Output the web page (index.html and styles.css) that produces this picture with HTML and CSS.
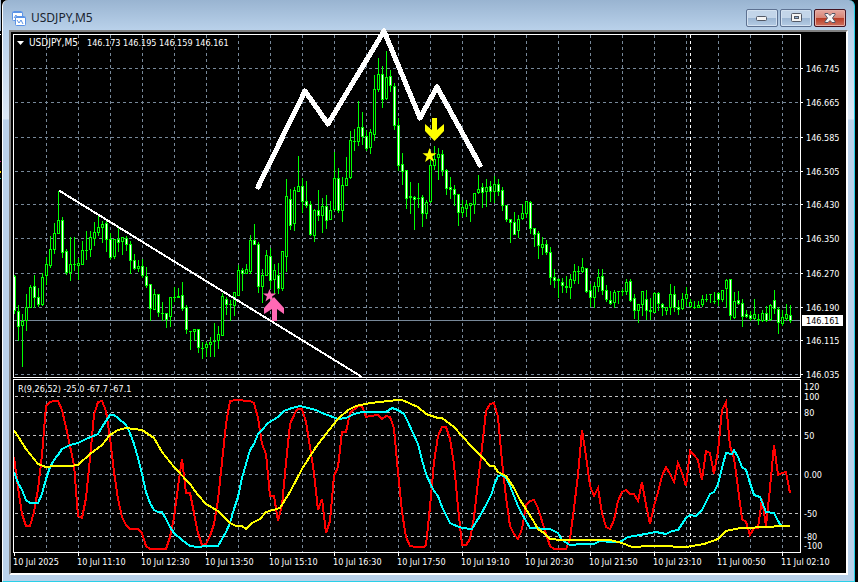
FILE: index.html
```html
<!DOCTYPE html>
<html lang="en">
<head>
    <meta charset="UTF-8">
    <meta name="viewport" content="width=device-width, initial-scale=1.0">
    <title>USDJPY,M5</title>
    <link rel="stylesheet" href="styles.css">
</head>
<body>
    <main class="window">
        <header class="titlebar">
            <svg class="app-icon" width="14" height="15" viewBox="0 0 14 15" aria-hidden="true">
                <rect x="0.5" y="0.5" width="10" height="9" rx="1" fill="#fff" stroke="#5b93e6"/>
                <path d="M1 1.500h9" stroke="#5b93e6"/>
                <path d="M2 7l2-3 1 3" fill="none" stroke="#5b93e6"/>
                <rect x="3.5" y="5.5" width="10" height="9" rx="1" fill="#fff" stroke="#5b93e6"/>
                <path d="M4 6.500h9" stroke="#5b93e6"/>
                <path d="M5 9l2 3 2-3 2 4" fill="none" stroke="#5b93e6"/>
            </svg>
            <h1>USDJPY,M5</h1>
            <div class="controls">
                <button type="button" aria-label="Minimize">
                    <svg width="12" height="6" viewBox="0 0 12 6"><rect x="0.5" y="1.5" width="10" height="4" rx="1" fill="#f4f4f4" stroke="#535966"/></svg>
                </button>
                <button type="button" aria-label="Maximize">
                    <svg width="12" height="10" viewBox="0 0 12 10"><rect x="1.5" y="0.5" width="10" height="8" rx="1" fill="#f4f4f4" stroke="#535966"/><rect x="4.5" y="3.5" width="4" height="2" fill="#8fb0d2" stroke="#535966"/></svg>
                </button>
                <button type="button" class="close" aria-label="Close">
                    <svg width="12" height="10" viewBox="0 0 12 10"><path d="M1 .5h3l2 2 2-2h3v1L8.500 5 11 8.500v1H8l-2-2-2 2H1v-1L3.500 5 1 1.500z" fill="#f6f6f6" stroke="#535666"/></svg>
                </button>
            </div>
        </header>
        <div class="chart">
            <svg id="chart" viewBox="11 32 835 541" role="img" aria-label="USDJPY,M5 chart">
                <g id="grid"></g>
                <g id="candles"></g>
                <g id="indicator"></g>
                <g id="frame"></g>
                <g id="drawings">
                    <path class="trend" d="M59 190.500L362 377"/>
                    <path class="zigzag" d="M258 187L305 91L328 124L384 31L420 118L437 87L480 165"/>
                    <path class="sell" d="M432 118h5v12l7-6v7l-9.500 10L425 131v-7l7 6z"/>
                    <path class="sell" d="M429.500 148l1.800 5.200h5.200l-4.200 3.300 1.600 5.500-4.400-3.300-4.400 3.300 1.600-5.500-4.200-3.300h5.200z"/>
                    <path class="buy" d="M274 297l10 11v6l-7-5v12h-5v-12l-8 5v-6z"/>
                    <path class="buy" d="M269.500 289l1.600 4.600h5l-4 3 1.500 5-4.100-3-4.100 3 1.500-5-4-3h5z"/>
                </g>
                <g id="labels">
                    <path d="M17 41h7l-3.500 4z" fill="#fff"/>
                    <text class="symbol" x="29" y="46">USDJPY,M5</text>
                    <text x="87" y="46">146.173 146.195 146.159 146.161</text>
                    <text x="18" y="392">R(9,26,52) -25.0 -67.7 -67.1</text>
                </g>
            </svg>
        </div>
    </main>
    <script src="chart.js"></script>
</body>
</html>
```

FILE: styles.css
```css
* {
    box-sizing: border-box;
}
body {
    margin: 0;
    padding: 0 3px 0 2px;
    background-color: #000;
    background-image: linear-gradient(#a9c0da 0 31px, #000 31px 34px, #fff 34px 35px, #000 35px 161px, #c71585 161px 162px, #000 162px 171px, #ffd700 171px 173px, #000 173px 178px, #20b2aa 178px 179px, #000 179px);
    background-size: 1px 100%;
    background-repeat: no-repeat;
    font-family: "Noto Sans", "Open Sans", sans-serif;
}
.window {
    padding: 0 6px 6px;
    border-left: 1px solid #fff;
    border-right: 1px solid #29d0e8;
    border-bottom: 1px solid #29d0e8;
    border-radius: 6px 6px 0 0;
    background: linear-gradient(#99b4d1, #b9d1ea 30px, #dce8f5 119px, #b9d1ea 120px);
}
.titlebar {
    display: flex;
    align-items: center;
    gap: 5px;
    height: 30px;
    padding: 6px 2px 0 3px;
}
.app-icon {
    flex: none;
}
h1 {
    flex: 1;
    margin: 0;
    font-size: 12px;
    line-height: 16px;
    font-weight: 400;
    color: #1a2430;
}
.controls {
    display: flex;
    gap: 2px;
}
.controls button {
    display: flex;
    align-items: center;
    justify-content: center;
    width: 32px;
    height: 18px;
    padding: 0;
    border: 1px solid #5d7191;
    border-radius: 2px;
    background: linear-gradient(#c3d5e9 50%, #9bb5d2 50%, #b5cce5);
    box-shadow: inset 0 0 0 1px #d4e2f1;
}
.controls .close {
    border-color: #431422;
    background: linear-gradient(#e3a198 10%, #d68474 50%, #b83a24 50%, #cf7260);
    box-shadow: inset 0 0 0 1px #e5ada4;
}
.chart {
    border: 2px solid #fff;
    border-top-color: #808080;
    border-left-color: #808080;
    background: #000;
}
#chart {
    display: block;
    width: 100%;
    height: auto;
    overflow: visible;
}
#grid, #candles, #frame, #indicator, .trend, .zigzag {
    shape-rendering: crispEdges;
}
#grid path {
    fill: none;
    stroke: #778899;
    stroke-dasharray: 3 3;
}
#grid .level {
    stroke: #c0c0c0;
}
#grid .day {
    stroke: #fff;
}
#grid .price {
    stroke-dasharray: none;
}
#candles .body {
    fill: #0f0;
}
#candles .up {
    fill: #000;
}
#candles .down {
    fill: #fff;
}
#frame path {
    fill: none;
    stroke: #fff;
}
#indicator polyline {
    fill: none;
    stroke-width: 2;
}
#indicator .fast {
    stroke: #f00;
}
#indicator .medium {
    stroke: #0ff;
}
#indicator .slow {
    stroke: #ff0;
}
.trend, .zigzag {
    fill: none;
    stroke: #fff;
    stroke-width: 2;
}
.zigzag {
    stroke-width: 5;
    stroke-linecap: round;
    stroke-linejoin: round;
}
.sell {
    fill: #ff0;
}
.buy {
    fill: #ff69b4;
}
#labels text {
    font-family: "DejaVu Sans Condensed", "DejaVu Sans", sans-serif;
    font-size: 9px;
    fill: #fff;
}
#labels .symbol {
    font-size: 10px;
}
#labels .tag {
    fill: #fff;
}
#labels .current {
    fill: #000;
}
```

FILE: chart.js
```js
const LEFT = 14;
const STEP = 4;

// high, body top, body bottom, low, direction
const candles = `
275 276 310 313 d,305 311 326 340 d,314 321 325 366 u,294 307 320 330 u,285 287 307 307 u,275 286 297 307 d,288 297 304 306 d,273 277 304 305 u,
257 264 275 284 u,236 249 265 267 u,223 233 249 253 u,191 220 233 233 u,217 220 252 257 d,249 251 272 274 d,237 264 272 280 u,237 264 264 270 u,
258 263 265 279 u,241 250 264 264 u,231 250 250 259 u,231 237 249 256 u,222 232 238 245 u,216 227 232 235 u,221 224 227 242 u,220 223 239 251 d,
233 239 257 259 d,239 239 256 258 u,228 239 242 251 d,237 237 241 254 u,236 238 244 250 d,241 244 260 273 d,254 260 268 269 d,260 266 268 271 u,
259 266 275 277 d,267 276 285 287 d,284 284 308 320 d,289 294 309 309 u,294 294 312 316 d,302 313 313 320 d,313 313 319 327 d,297 297 316 326 u,
287 297 297 301 u,288 296 297 297 d,282 295 308 310 d,305 307 329 333 d,331 331 331 349 d,329 329 331 340 u,329 329 347 352 d,342 348 348 358 u,
342 344 347 356 u,337 342 344 356 u,323 341 341 356 u,326 334 340 348 u,293 296 335 335 u,297 299 304 314 d,300 304 304 320 u,292 292 305 315 u,
265 270 295 295 u,268 270 273 290 d,264 269 273 273 u,235 240 271 273 u,224 240 244 244 d,242 244 286 292 d,269 275 286 302 u,250 255 275 275 u,
248 256 280 288 d,264 270 279 293 u,263 275 288 293 d,251 251 288 290 u,179 196 256 271 u,189 199 225 229 d,187 190 223 230 u,156 186 191 191 u,
178 186 201 212 d,181 201 205 207 d,201 204 234 235 d,209 210 235 241 u,190 210 215 220 d,198 206 215 232 u,195 206 220 228 d,201 210 219 219 u,
152 178 209 210 u,168 178 210 212 d,177 185 210 221 u,157 178 185 185 u,131 140 177 178 u,129 141 141 150 u,101 127 141 145 u,112 127 136 144 d,
130 136 148 150 d,129 132 147 153 u,75 89 134 140 u,58 74 89 91 u,66 74 99 107 d,51 77 98 99 u,70 76 85 91 d,83 86 125 129 d,
118 125 165 170 d,153 164 171 184 d,170 170 198 208 d,182 196 197 213 u,196 197 199 229 d,183 198 198 207 u,195 197 213 226 d,200 202 213 218 u,
160 165 201 202 u,146 159 165 169 u,148 154 157 179 u,150 154 170 175 d,169 170 188 194 d,177 187 189 198 d,185 189 194 205 d,194 194 212 225 d,
200 207 212 216 u,200 204 208 216 u,203 203 205 221 u,193 193 204 213 u,175 189 192 193 u,183 187 192 207 d,179 187 191 206 u,181 186 191 201 d,
176 184 191 202 u,179 184 191 195 d,187 190 205 210 d,205 205 219 221 d,219 219 222 242 d,212 222 234 234 d,215 219 230 237 u,204 213 218 219 u,
201 201 213 217 u,201 202 228 233 d,228 228 234 246 d,231 233 245 258 d,237 244 247 254 u,240 244 252 254 d,247 252 277 284 d,269 277 280 287 d,
278 279 280 297 d,278 282 285 292 d,276 286 287 292 u,274 279 287 298 u,264 271 280 283 u,266 271 271 283 u,258 267 271 272 u,268 268 291 292 d,
284 290 297 306 d,282 286 297 307 u,269 277 286 291 u,269 276 290 294 d,285 290 299 301 d,291 300 303 304 d,290 292 302 307 u,291 291 291 303 u,
289 291 291 295 u,279 282 291 294 u,279 281 300 301 d,294 298 310 318 d,304 304 310 322 u,291 291 304 315 u,290 299 310 319 d,298 310 311 319 u,
292 293 312 312 u,292 293 303 310 d,303 304 307 315 d,307 307 310 314 u,284 294 307 314 u,286 294 307 311 d,300 307 309 314 d,293 299 308 309 u,
287 294 298 305 u,299 302 306 307 u,301 307 307 308 u,301 305 307 307 u,295 299 304 306 u,294 299 299 301 u,294 294 294 302 u,292 301 301 303 u,
292 293 299 305 d,290 290 299 301 u,279 280 288 307 u,279 279 315 319 d,292 301 317 318 u,291 300 303 304 d,299 303 316 326 d,310 314 316 317 d,
311 315 318 320 d,299 314 318 319 u,314 319 320 324 d,310 313 320 321 u,306 313 320 321 d,304 305 319 320 u,290 300 308 313 d,307 309 322 333 d,
310 317 323 325 u,304 314 318 320 u,305 315 320 322 d`;

const lines = {
    fast: `14,457 18,488 22,514 26,526 30,526 34,512 38,489 42,455 46,406 50,402 54,401 58,401 62,410 66,427 70,446 74,465 78,516 82,518
        86,498 90,458 94,415 98,402 102,401 106,411 110,438 114,472 118,499 122,517 126,525 130,529 138,529 142,533 146,546 150,549 166,549
        170,537 174,518 178,487 182,459 186,493 190,493 194,513 198,533 202,545 206,544 210,536 214,524 218,500 222,462 226,424 230,401
        236,400 250,401 254,403 258,418 262,444 266,454 270,496 274,496 278,521 282,505 286,463 290,424 296,411 298,409 302,409 306,422
        310,447 314,473 318,510 322,499 326,533 330,521 334,476 338,467 342,432 346,432 350,413 358,406 362,406 366,417 370,416 378,415
        382,419 386,416 390,417 394,428 398,472 402,512 406,537 410,546 416,547 424,547 426,545 430,507 434,462 438,436 442,427 446,427
        450,439 454,464 458,507 462,545 466,545 470,539 474,517 478,482 482,448 486,411 490,404 494,403 498,417 502,461 506,497 510,526
        514,534 518,539 522,529 526,505 530,501 534,500 538,508 542,521 546,534 550,546 554,549 566,549 570,539 574,508 578,475 582,430
        586,456 590,486 594,496 598,488 602,513 606,527 610,529 614,520 618,501 622,492 626,490 630,494 634,494 638,501 642,482 646,505
        650,524 654,506 658,492 662,476 666,467 670,474 674,482 678,463 682,473 686,486 690,451 694,455 698,460 702,480 706,451 710,453
        714,474 718,451 722,410 726,402 730,446 734,458 738,488 742,519 746,522 750,535 754,528 758,528 762,499 766,526 770,488 774,445
        778,475 782,473 786,472 790,493`,
    medium: `14,472 18,483 22,490 26,500 30,503 38,503 42,494 46,479 50,467 54,460 58,455 62,449 66,447 70,445 78,443 86,439 98,434
        102,427 110,415 114,415 118,418 126,425 130,433 134,444 138,458 142,474 146,492 150,503 154,510 158,512 162,512 166,519 170,527
        174,533 182,540 190,546 198,547 206,546 218,546 222,539 226,532 230,523 234,509 238,497 242,478 246,464 250,450 254,444 258,434
        262,430 268,423 278,417 284,411 292,408 300,406 308,408 316,410 322,413 330,416 338,419 346,418 354,414 362,412 386,412 392,408
        398,410 404,414 408,422 412,431 418,444 422,460 426,474 430,483 434,491 438,496 442,507 446,515 450,523 454,525 462,528 472,529
        476,522 480,516 486,505 492,493 494,485 498,476 502,475 506,478 510,486 514,496 518,506 522,514 526,521 530,528 550,529 558,533
        562,540 570,545 582,544 594,544 600,541 612,542 620,542 628,537 640,535 656,532 666,534 672,531 678,530 682,524 686,518 690,515
        696,516 702,510 706,502 710,494 714,492 718,484 722,468 726,453 732,454 734,450 738,457 742,467 746,470 750,483 754,495 760,497
        766,512 774,513 778,521 782,527`,
    slow: `14,430 26,449 38,464 46,467 54,466 70,466 78,465 90,454 102,445 110,435 118,430 126,428 142,430 154,438 162,452 174,467
        190,484 198,495 206,504 218,511 230,523 236,526 242,526 246,529 252,523 260,519 266,512 280,508 290,492 302,469 316,447 326,434
        338,419 348,410 356,406 370,403 398,400 402,400 418,407 426,414 438,418 442,418 454,427 462,436 472,447 482,457 490,466 494,466
        498,472 506,476 514,488 520,500 526,509 534,522 538,529 544,533 550,539 562,540 610,540 622,543 632,547 650,546 660,546 686,547
        692,546 704,544 718,539 726,531 740,528 770,527 778,526 790,526`
};

const prices = [[68, '146.745'], [102, '146.665'], [137, '146.585'], [171, '146.505'], [204, '146.430'],
    [238, '146.350'], [273, '146.270'], [307, '146.190'], [340, '146.115'], [374, '146.035']];
const levels = [[386, '120'], [396, '100'], [412, '80'], [435, '50'], [474, '0.00'], [513, '-50'], [536, '-80'], [545, '-100']];
const times = ['10 Jul 2025', '10 Jul 11:10', '10 Jul 12:30', '10 Jul 13:50', '10 Jul 15:10', '10 Jul 16:30', '10 Jul 17:50',
    '10 Jul 19:10', '10 Jul 20:30', '10 Jul 21:50', '10 Jul 23:10', '11 Jul 00:50', '11 Jul 02:10'];

function add(parent, tag, attrs, text) {
    const el = document.createElementNS('http://www.w3.org/2000/svg', tag);
    for (const key in attrs) {
        el.setAttribute(key, attrs[key]);
    }
    if (text) {
        el.textContent = text;
    }
    document.getElementById(parent).appendChild(el);
}

function line(x1, y1, x2, y2) {
    return `M${x1} ${y1}L${x2} ${y2}`;
}

// Grid
for (let x = 46.5; x < 800; x += 32) {
    add('grid', 'path', { d: line(x, 35, x, 552) });
}
prices.forEach(([y]) => add('grid', 'path', { d: line(15, y + 0.5, 800, y + 0.5) }));
levels.slice(1, -1).forEach(([y]) => {
    add('grid', 'path', { class: y === 474 ? '' : 'level', d: line(15, y + 0.5, 800, y + 0.5) });
});
add('grid', 'path', { class: 'day', d: line(690.5, 35, 690.5, 552) });
add('grid', 'path', { class: 'price', d: line(14, 320.5, 800, 320.5) });

// Candles
candles.trim().split(',').forEach((row, i) => {
    const [high, top, bottom, low, dir] = row.trim().split(' ');
    const x = LEFT + i * STEP;
    add('candles', 'rect', { class: 'body', x: x, y: high, width: 1, height: low - high + 1 });
    add('candles', 'rect', { class: 'body', x: x - 1, y: top, width: 3, height: bottom - top + 1 });
    if (bottom - top > 1) {
        add('candles', 'rect', { class: dir === 'u' ? 'up' : 'down', x: x, y: +top + 1, width: 1, height: bottom - top - 1 });
    }
});

// Indicator
for (const name in lines) {
    add('indicator', 'polyline', { class: name, points: lines[name] });
}

// Frames and ticks
add('frame', 'path', { d: 'M13.5 34.5H800.5V377.5H13.5z' });
add('frame', 'path', { d: 'M13.5 379.5H800.5V552.5H13.5z' });
prices.forEach(([y]) => add('frame', 'path', { d: line(801, y + 0.5, 803, y + 0.5) }));

// Labels
prices.forEach(([y, text]) => add('labels', 'text', { x: 806, y: y + 4 }, text));
levels.forEach(([y, text]) => add('labels', 'text', { x: 804, y: y + 4 }, text));
times.forEach((text, i) => {
    const x = LEFT + i * 64;
    add('frame', 'path', { d: line(x + 0.5, 552, x + 0.5, 556) });
    add('labels', 'text', { x: x - 1, y: 565 }, text);
});
add('labels', 'rect', { class: 'tag', x: 802, y: 315, width: 41, height: 11 });
add('labels', 'text', { class: 'current', x: 806, y: 324 }, '146.161');
```
